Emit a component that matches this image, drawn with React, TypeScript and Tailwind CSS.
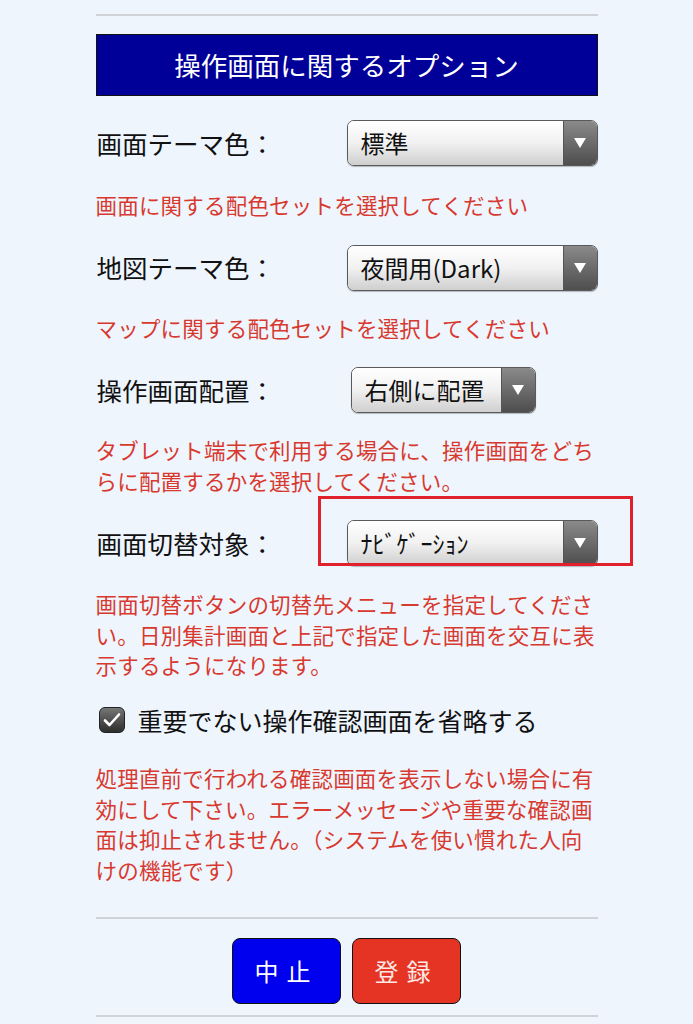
import React from 'react';

const jp = { fontFamily: '"Noto Sans CJK JP", "Noto Sans", sans-serif' };

function Select({ value, width }: { value: string; width: string }) {
  return (
    <div
      className={`flex h-[46px] ${width} overflow-hidden rounded-[7px] border border-[#5a5a5a] shadow-[0_1px_1px_rgba(0,0,0,0.25)]`}
    >
      <div className="flex flex-1 items-center bg-gradient-to-b from-[#ffffff] via-[#f1f1f1] to-[#cfcfcf] pl-[13px] text-[24px] text-[#111]">
        {value}
      </div>
      <div className="flex w-[34px] items-center justify-center border-l border-[#555] bg-gradient-to-b from-[#8a8a8a] to-[#4e4e4e]">
        <svg width="12" height="10" viewBox="0 0 12 10">
          <path d="M0 0 L12 0 L6 10 Z" fill="#fff" />
        </svg>
      </div>
    </div>
  );
}

function Hint({ children, className = '' }: { children: React.ReactNode; className?: string }) {
  return (
    <p className={`text-[21.5px] leading-[30.5px] tracking-[0.2px] text-[#d8392f] ${className}`}>{children}</p>
  );
}

function Row({ label, children, className = '' }: { label: string; children: React.ReactNode; className?: string }) {
  return (
    <div className={`flex items-center ${className}`}>
      <div className="w-[251px] pl-[1px] text-[25.5px] text-[#111]">{label}</div>
      {children}
    </div>
  );
}

export default function App() {
  return (
    <div className="min-h-[1024px] bg-[#eef5fd] pt-[14px]" style={jp}>
      <div className="mx-auto w-[502px]">
        <div className="h-[2px] bg-[#cfd2d6]" />

        <div className="mt-[18px] flex h-[62px] items-center justify-center border border-[#111] bg-[#000099] text-[26.5px] text-white">
          操作画面に関するオプション
        </div>

        <Row label="画面テーマ色：" className="mt-[24px]">
          <Select value="標準" width="w-[251px]" />
        </Row>
        <Hint className="mt-[24px]">画面に関する配色セットを選択してください</Hint>

        <Row label="地図テーマ色：" className="mt-[24px]">
          <Select value="夜間用(Dark)" width="w-[251px]" />
        </Row>
        <Hint className="mt-[22px]">マップに関する配色セットを選択してください</Hint>

        <Row label="操作画面配置：" className="mt-[24px]">
          <div className="ml-[4px]">
            <Select value="右側に配置" width="w-[185px]" />
          </div>
        </Row>
        <Hint className="mt-[22px]">
          タブレット端末で利用する場合に、操作画面をどちらに配置するかを選択してください。
        </Hint>

        <div className="relative mt-[24px]">
          <div className="pointer-events-none absolute left-[222px] top-[-24px] h-[70px] w-[315px] border-[3px] border-[#e0202a]" />
          <Row label="画面切替対象：">
            <Select value="ﾅﾋﾞｹﾞｰｼｮﾝ" width="w-[251px]" />
          </Row>
        </div>
        <Hint className="mt-[23px]">
          画面切替ボタンの切替先メニューを指定してください。日別集計画面と上記で指定した画面を交互に表示するようになります。
        </Hint>

        <label className="mt-[21px] flex items-center gap-[13px] pl-[3px]">
          <span className="flex h-[26px] w-[26px] items-center justify-center rounded-[6px] border border-[#222] bg-gradient-to-b from-[#777] to-[#2e2e2e]">
            <svg width="18" height="16" viewBox="0 0 18 16">
              <path d="M2 8.5 L6.5 13 L16 2.5" fill="none" stroke="#fff" strokeWidth="2.6" strokeLinecap="round" strokeLinejoin="round" />
            </svg>
          </span>
          <span className="text-[25px] text-[#111]">重要でない操作確認画面を省略する</span>
        </label>

        <Hint className="mt-[24px]">
          処理直前で行われる確認画面を表示しない場合に有効にして下さい。エラーメッセージや重要な確認画面は抑止されません。（システムを使い慣れた人向けの機能です）
        </Hint>

        <div className="mt-[32px] h-[2px] bg-[#cfd2d6]" />

        <div className="mt-[19px] flex justify-center gap-[11px]">
          <button className="h-[66px] w-[109px] rounded-[8px] border-[1.5px] border-[#111] bg-[#0000ee] text-[24px] tracking-[8px] text-white">
            中止
          </button>
          <button className="h-[66px] w-[109px] rounded-[8px] border-[1.5px] border-[#111] bg-[#e53424] text-[24px] tracking-[8px] text-[#ffe9e4]">
            登録
          </button>
        </div>

        <div className="mt-[11px] h-[2px] bg-[#cfd2d6]" />
      </div>
    </div>
  );
}
